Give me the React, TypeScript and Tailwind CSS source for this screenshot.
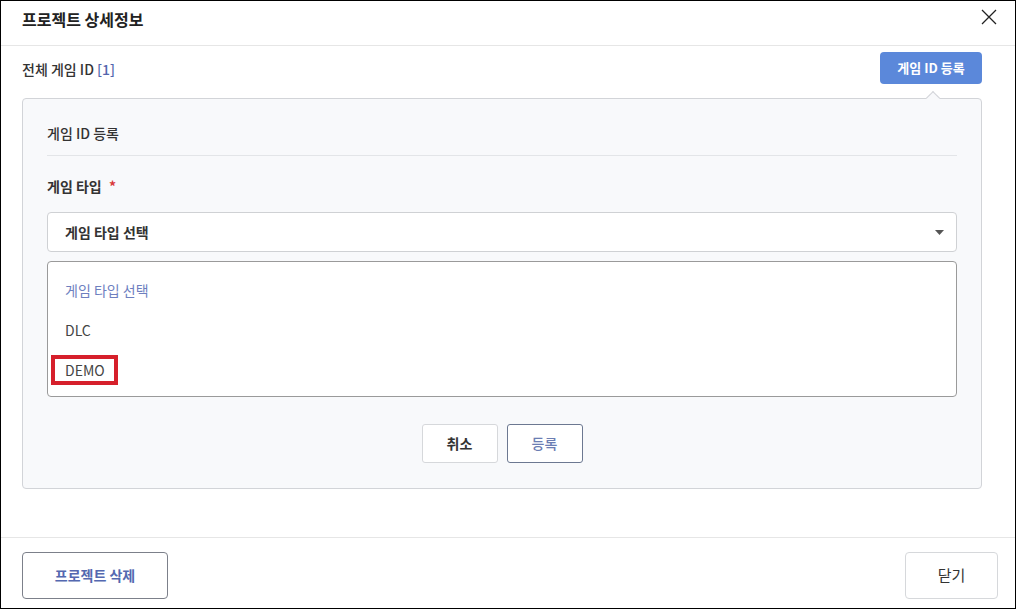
import React from 'react'

const FONT = { fontFamily: '"Noto Sans CJK KR", "Noto Sans", sans-serif' }

function CloseIcon() {
  return (
    <svg width="16" height="16" viewBox="0 0 16 16" fill="none" stroke="#222" strokeWidth="1.3">
      <path d="M1 1 L15 15 M15 1 L1 15" />
    </svg>
  )
}

export default function App() {
  return (
    <div style={FONT} className="w-[1016px] h-[609px] border border-black bg-white flex flex-col text-[#222]">
      {/* header */}
      <div className="h-[45px] shrink-0 border-b border-[#e6e6e6] pl-[21px] pr-[18px] pt-[7px] flex items-start justify-between">
        <h1 className="text-[16px] leading-[22px] font-bold">프로젝트 상세정보</h1>
        <button className="mt-[1px]">
          <CloseIcon />
        </button>
      </div>

      {/* body */}
      <div className="flex-1 pl-[21px] pr-[33px]">
        <div className="mt-[6px] flex items-center justify-between">
          <div className="text-[14px] leading-[20px] font-medium text-[#333] pt-[2px]">
            전체 게임 ID <span className="text-[#5365ad]">[1]</span>
          </div>
          <button className="w-[102px] h-[32px] rounded-[4px] bg-[#5b88da] text-white text-[13px] font-bold">게임 ID 등록</button>
        </div>

        <div className="relative mt-[14px] border border-[#d2d4d8] rounded-[4px] bg-[#f8f9fb] px-[24px] pt-[24px] pb-[25px]">
          <div className="absolute top-[-6px] right-[43px] w-[10px] h-[10px] rotate-45 bg-[#f8f9fb] border-t border-l border-[#d2d4d8]" />
          <div className="text-[14px] leading-[20px] font-medium text-[#333] pb-[12px] border-b border-[#e3e5e8]">게임 ID 등록</div>

          <div className="mt-[20px] text-[14px] leading-[20px] font-bold text-[#333]">
            게임 타입 <span className="text-[#d9383a] ml-[4px]">*</span>
          </div>

          <div className="mt-[16px] h-[40px] bg-white border border-[#cfd1d4] rounded-[4px] pl-[17px] pr-[12px] flex items-center justify-between">
            <span className="text-[14px] font-bold text-[#333]">게임 타입 선택</span>
            <svg width="9" height="5" viewBox="0 0 9 5">
              <path d="M0 0 L9 0 L4.5 5 Z" fill="#555" />
            </svg>
          </div>

          <div className="mt-[9px] h-[136px] bg-white border border-[#9a9a9a] rounded-[4px] pt-[8px] pl-[17px]">
            <div className="h-[40px] flex items-center text-[14px] text-[#6e7fbf]">게임 타입 선택</div>
            <div className="h-[40px] flex items-center text-[14px] text-[#444]">DLC</div>
            <div className="h-[40px] flex items-center text-[14px] text-[#444]">
              <span className="-ml-[14px] border-[4px] border-[#d6202b] pl-[10px] pr-[9px] leading-[22px]">DEMO</span>
            </div>
          </div>

          <div className="mt-[27px] flex justify-center gap-[9px]">
            <button className="w-[76px] h-[39px] bg-white border border-[#d6d8db] rounded-[3px] text-[14px] font-bold text-[#333]">취소</button>
            <button className="w-[76px] h-[39px] bg-white border border-[#6c7891] rounded-[3px] text-[14px] font-medium text-[#6b7db3]">등록</button>
          </div>
        </div>
      </div>

      {/* footer */}
      <div className="shrink-0 border-t border-[#e6e6e6] pl-[21px] pr-[17px] pt-[14px] pb-[9px] flex justify-between">
        <button className="w-[146px] h-[47px] bg-white border border-[#7c808a] rounded-[4px] text-[14px] font-bold text-[#5468b0]">프로젝트 삭제</button>
        <button className="w-[93px] h-[47px] bg-white border border-[#d6d8db] rounded-[4px] text-[15px] text-[#333]">닫기</button>
      </div>
    </div>
  )
}
